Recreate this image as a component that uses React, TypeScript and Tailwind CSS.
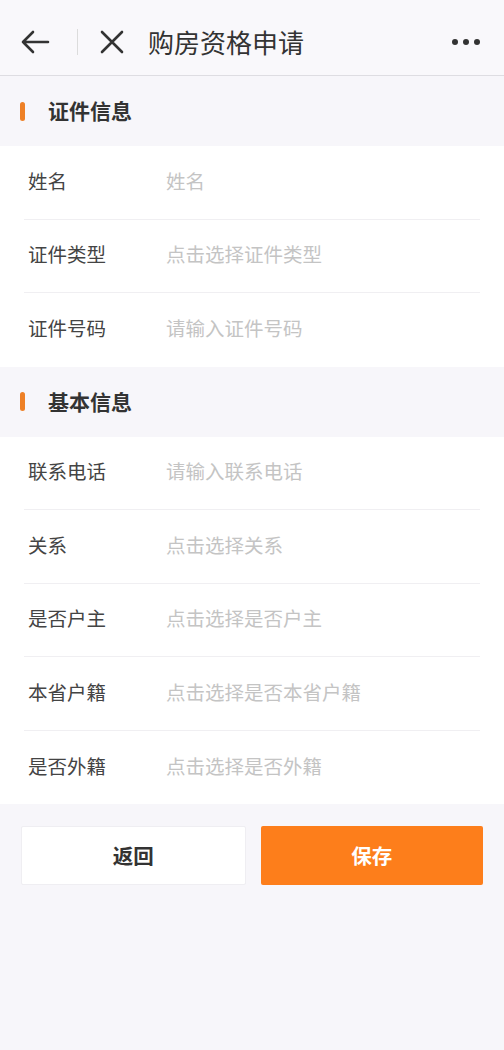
import type { ReactNode } from 'react'

const FONT = { fontFamily: '"Noto Sans CJK SC", "Noto Sans", sans-serif' }

const certFields = [
  { label: '姓名', placeholder: '姓名' },
  { label: '证件类型', placeholder: '点击选择证件类型' },
  { label: '证件号码', placeholder: '请输入证件号码' },
]

const basicFields = [
  { label: '联系电话', placeholder: '请输入联系电话' },
  { label: '关系', placeholder: '点击选择关系' },
  { label: '是否户主', placeholder: '点击选择是否户主' },
  { label: '本省户籍', placeholder: '点击选择是否本省户籍' },
  { label: '是否外籍', placeholder: '点击选择是否外籍' },
]

const SectionTitle = ({ children }: { children: ReactNode }) => (
  <div className="flex h-[70px] items-center bg-[#f7f6fa] pl-5">
    <span className="h-[19px] w-[5px] rounded-full bg-[#ee8026]" />
    <span className="ml-[23px] text-[21px] font-bold text-[#333]">{children}</span>
  </div>
)

const FieldList = ({ fields }: { fields: { label: string; placeholder: string }[] }) => (
  <div className="bg-white px-6">
    {fields.map((field, index) => (
      <div
        key={field.label}
        className={`flex h-[73.5px] items-center pb-1 ${index < fields.length - 1 ? 'border-b border-[#f0eff2]' : ''}`}
      >
        <span className="w-[142px] pl-1 text-[19.5px] text-[#444]">{field.label}</span>
        <span className="text-[19.5px] text-[#c4c4c4]">{field.placeholder}</span>
      </div>
    ))}
  </div>
)

const App = () => {
  return (
    <div className="min-h-[1050px] bg-[#f7f6fa]" style={FONT}>
      <div className="flex h-[76px] items-center border-b border-[#dedde2] bg-[#f9f8fb] pl-5 pr-6 pt-[9px]">
        <svg width="30" height="26" viewBox="0 0 30 26" fill="none" stroke="#333" strokeWidth="2.6" strokeLinecap="round" strokeLinejoin="round">
          <path d="M28 13H3M13 3 3 13l10 10" />
        </svg>
        <span className="ml-[27px] h-[26px] w-px bg-[#dcdcdc]" />
        <svg className="ml-[22px]" width="24" height="24" viewBox="0 0 24 24" fill="none" stroke="#333" strokeWidth="2.6" strokeLinecap="round">
          <path d="M2 2l20 20M22 2 2 22" />
        </svg>
        <span className="ml-[24px] text-[26px] leading-none text-[#333]">购房资格申请</span>
        <div className="ml-auto flex gap-[5px]">
          <span className="h-[6px] w-[6px] rounded-full bg-[#333]" />
          <span className="h-[6px] w-[6px] rounded-full bg-[#333]" />
          <span className="h-[6px] w-[6px] rounded-full bg-[#333]" />
        </div>
      </div>

      <SectionTitle>证件信息</SectionTitle>
      <FieldList fields={certFields} />

      <SectionTitle>基本信息</SectionTitle>
      <FieldList fields={basicFields} />

      <div className="flex gap-[15px] px-[21px] pt-[22px]">
        <button
          type="button"
          className="h-[59px] flex-1 rounded-[2px] border border-[#efeef2] bg-white text-[20.5px] font-bold text-[#333]"
        >
          返回
        </button>
        <button
          type="button"
          className="h-[59px] flex-1 rounded-[2px] bg-[#fd7e1b] text-[20.5px] font-bold text-white"
        >
          保存
        </button>
      </div>
    </div>
  )
}

export default App
